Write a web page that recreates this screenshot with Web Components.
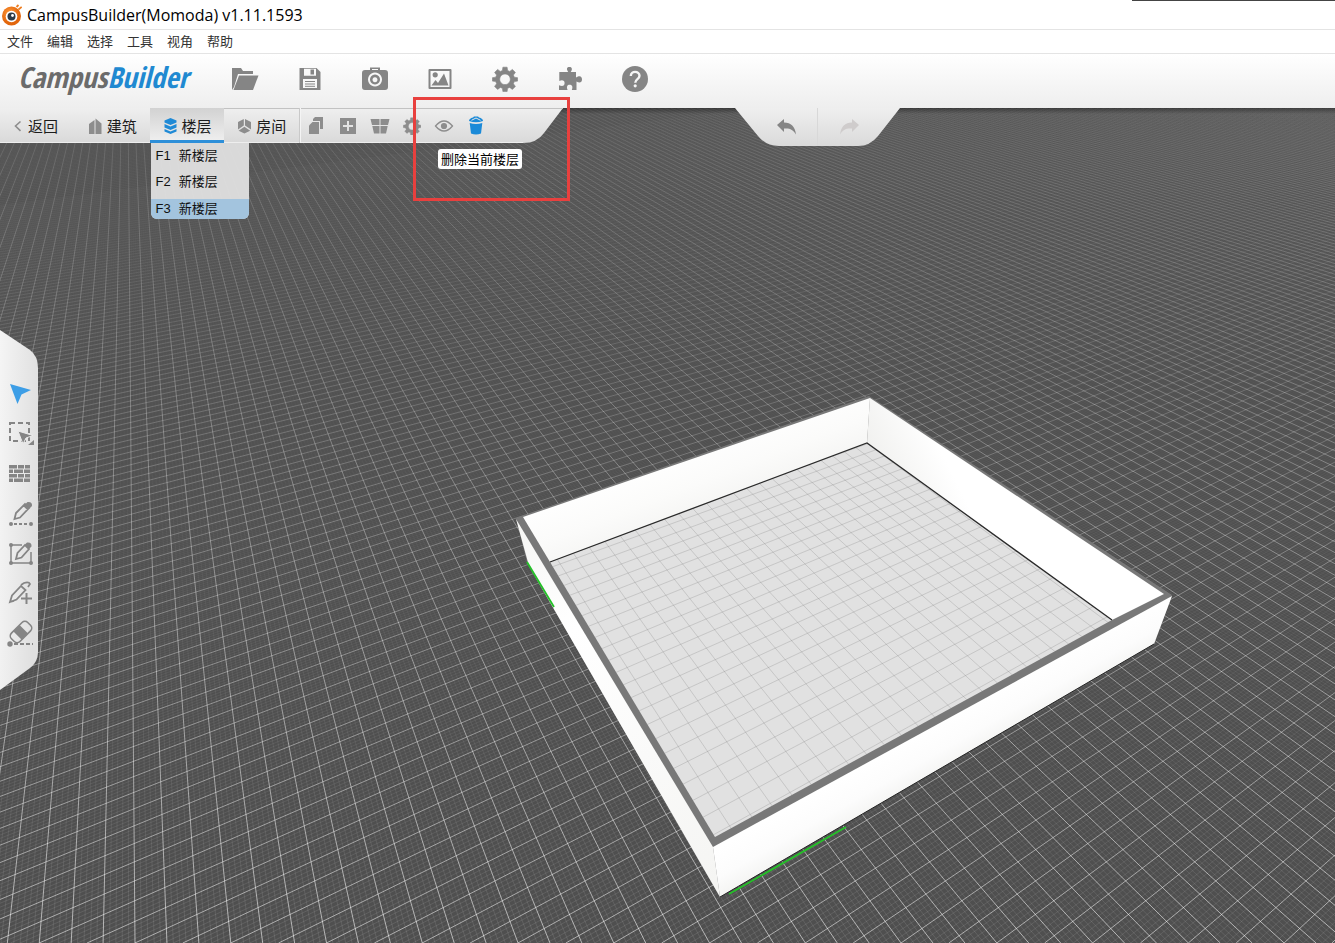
<!DOCTYPE html>
<html lang="zh-CN">
<head>
<meta charset="utf-8">
<title>CampusBuilder(Momoda) v1.11.1593</title>
<style>
html,body{height:100%;margin:0}
body{overflow:hidden;font-family:"Liberation Sans","Noto Sans CJK SC",sans-serif;color:#222}
</style>
</head>
<body>
<campus-app></campus-app>
<script>
const ICONS = {
  app: [22, 22, `<defs><radialGradient id="g" cx=".4" cy=".35"><stop offset="0" stop-color="#ff9a3c"/><stop offset="1" stop-color="#e2660c"/></radialGradient></defs><circle cx="11.500" cy="12" r="9.500" fill="url(#g)"/><circle cx="11.500" cy="12.500" r="5.800" fill="#fff"/><circle cx="11.500" cy="12.500" r="4" fill="#2e3b48"/><circle cx="12.500" cy="11.500" r="1.400" fill="#fff"/><path d="M16.500 3l2-2M18.500 5.500l3.200-2.600" stroke="#ee7d20" stroke-width="1.800"/>`],
  folder: [28, 24, `<path d="M1 1h9l2 3h10v3H7L3 20 1 23z"/><path d="M8 8.500h19.500L22 23H2.500z"/>`],
  save: [24, 24, `<path fill-rule="evenodd" d="M1.500 1h17l4 4v18h-21zM6 1.800v7h12v-7zM5 12v9h14v-9z"/><path d="M12.500 2.500h3.500v5h-3.500z"/><path d="M7 14.500h10M7 17h10M7 19.300h10" stroke="currentColor" stroke-width="1"/>`],
  camera: [28, 26, `<path fill-rule="evenodd" d="M9 4V1.500h10V4h5q3 0 3 3v14q0 3-3 3H4q-3 0-3-3V7q0-3 3-3zM11 3v1h6V3zM14 6.500a7 7 0 1 0 .01 0z"/><path fill-rule="evenodd" d="M14 8.500a5 5 0 1 0 .01 0zM14 11.200a2.500 2.500 0 1 1-.01 0z"/>`],
  image: [24, 22, `<path fill-rule="evenodd" d="M1.500 1h21q1 0 1 1v18q0 1-1 1h-21q-1 0-1-1V2q0-1 1-1zM2.500 3v16h19V3z"/><circle cx="7.200" cy="6.800" r="2.600"/><path d="M3.500 17.500l4-5.500 2.500 3 6-9.500 4.500 12z"/>`],
  gear: [26, 26, `<path fill-rule="evenodd" d="M10.900 1.200h4.200l.5 3.300 2.100.9 2.700-2 3 3-2 2.700.9 2.100 3.300.5v3.400l-3.300.5-.9 2.100 2 2.700-3 3-2.700-2-2.100.9-.5 3.300h-4.200l-.5-3.300-2.100-.9-2.700 2-3-3 2-2.700-.9-2.100-3.300-.5v-3.400l3.300-.5.9-2.100-2-2.700 3-3 2.700 2 2.100-.9zM13 8a5.300 5.300 0 1 0 .01 0z" stroke="currentColor" stroke-linejoin="round" stroke-width=".6"/>`],
  puzzle: [26, 26, `<path d="M7 6h4.200C9 2.500 10 1 12.400 1s3.500 2 1.300 5H19v5.500c4-2.500 6-1 6 1.900 0 3-2.500 4-5.500 2V24h-4.700c1.500-3.500 0-5.200-2.200-5.200-2.300 0-3.400 2-2 5.200H2v-4.800c3.500 1.700 5.600.5 5.600-2.200 0-2.500-2.300-3.500-5.300-2V6z"/>`],
  help: [28, 28, `<circle cx="14" cy="14" r="13"/><path d="M9.800 11c0-5.500 8.700-5.300 8.700-.3 0 3.600-4.200 3.200-4.200 7" fill="none" stroke="#f6f6f6" stroke-width="2.400"/><circle cx="14.200" cy="20.800" r="1.600" fill="#f6f6f6"/>`],
  back: [11, 16, `<path d="M7.500 3.500L2.500 8l5 4.800" fill="none" stroke="currentColor" stroke-width="1.600"/>`],
  building: [15, 16, `<path d="M1 6l5.500-4v14H1zM7.500 .5L13.500 5.500V16h-6z"/>`],
  floors: [15, 16, `<path d="M1.500 2.500L7.500 0l6 2.500v2L7.500 7l-6-2.500zM1.500 6l6 2.500 6-2.500v3.500L7.500 12l-6-2.500zM1.500 11l6 2.500 6-2.500v2.500L7.500 16l-6-2.500z"/>`],
  room: [15, 16, `<path d="M6.800 1v6.500L1 11.500V4zM8 1l6 3v7.500L8 7.500zM7.400 8.800l5.800 4-5.800 2.700-5.800-2.700z"/>`],
  copy: [16, 18, `<path d="M7 0h8v12h-3V4H5V2z"/><path d="M4.500 5H11v12H1V8.500z"/>`],
  add: [18, 18, `<path fill-rule="evenodd" d="M1 1h16v16H1zM8 4v4H4v2h4v4h2v-4h4V8h-4V4z"/>`],
  split: [20, 18, `<path d="M.5 2h9v6H2zM10.500 2h9L18 8h-7.500zM2.300 9h7.200v7.500H4zM10.500 9h7.200L16 16.500h-5.500z"/>`],
  gearsmall: [18, 18, ''],
  eye: [20, 16, `<path d="M1.500 8Q10-2 18.500 8 10 18 1.500 8z" fill="none" stroke="currentColor" stroke-width="1.300"/><circle cx="10" cy="8" r="3.100"/>`],
  trash: [16, 20, `<path d="M1 5Q1 2.500 5 1.500L6 .5h4l1 1q4 1 4 3.500-7 2.600-14 0z"/><path d="M3.500 4.300L8 2l4.500 2.300" stroke="#e5e5e5" fill="none"/><path d="M1.700 7q6.300 2 12.600 0L13 17.500q-5 2-10 0z"/>`],
  undo: [22, 18, `<path d="M1 7l7-6v3.500c7 0 11 4 12 12-3-5-6-6.500-12-6V14z"/>`],
  redo: [22, 18, `<path d="M21 7l-7-6v3.500c-7 0-11 4-12 12 3-5 6-6.500 12-6V14z"/>`],
  pointer: [24, 24, `<path d="M2 2l21 6-9.500 4.500L9.500 22z"/>`],
  marquee: [28, 24, `<path d="M4 1h19v18H4z" fill="none" stroke="currentColor" stroke-width="2" stroke-dasharray="5 3"/><path d="M12 9l15 4.500-7 2.500-3 6z" stroke="#ececec" stroke-width="1"/><path d="M28 18v5h-6z"/>`],
  wall: [24, 24, `<path d="M1 3h8v3.500H1zM10 3h6v3.500h-6zM17 3h5v3.500h-5zM1 7.500h4V11H1zM6 7.500h9V11H6zM16 7.500h6V11h-6zM1 12h8v3.500H1zM10 12h6v3.500h-6zM17 12h5v3.500h-5zM1 16.500h4V20H1zM6 16.500h9V20H6zM16 16.500h6V20h-6z"/>`],
  line: [26, 26, `<path d="M7.500 18l1.500-6L18 3l4 4-9 9.500zM17 4.500l4 4" fill="none" stroke="currentColor" stroke-width="1.800"/><path d="M18.500 3l2-2q5-.5 4.500 4l-2.500 2.500z"/><circle cx="4" cy="23" r="2"/><circle cx="24" cy="23" r="2"/><path d="M7 23h14" stroke="currentColor" stroke-width="1.800" stroke-dasharray="3 2"/>`],
  area: [26, 26, `<path d="M15 4H4v18h20V11" fill="none" stroke="currentColor" stroke-width="1.500"/><path d="M9 18l1.500-6L18 4l4 4-7.500 8.500z" fill="none" stroke="currentColor" stroke-width="1.800"/><path d="M18 3.500l2-2q5-.5 4.500 4L22 8z"/><circle cx="4" cy="4" r="2"/><circle cx="4" cy="22" r="2"/><circle cx="24" cy="22" r="2"/>`],
  addline: [26, 26, `<path d="M3 21l2-6.500L14 5l4.500 4-9 9.500zM14 4l3-2q5-1.500 6 1l-2 3M3 21l4-1" fill="none" stroke="currentColor" stroke-width="1.800"/><path d="M19.500 12v11M14 17.500h11" stroke="currentColor" stroke-width="2"/>`],
  erase: [28, 28, `<g transform="rotate(-45 15 12)"><rect x="3.500" y="6" width="23" height="12" rx="4" fill="none" stroke="currentColor" stroke-width="1.600"/><path d="M10 6h9v12h-9z"/></g><circle cx="4" cy="24" r="2.700"/><path d="M8 24h19" stroke="currentColor" stroke-width="1.800" stroke-dasharray="4 2"/>`]
};
ICONS.gearsmall[2] = `<g transform="scale(.7)">${ICONS.gear[2]}</g>`;

function define(name, html, setup) {
  const t = document.createElement('template');
  t.innerHTML = html;
  customElements.define(name, class extends HTMLElement {
    constructor() {
      super();
      this.attachShadow({mode: 'open'}).append(t.content.cloneNode(true));
    }
    connectedCallback() { if (setup) setup(this, this.shadowRoot); }
  });
}

define('ui-icon', `<style>:host{display:block;flex:none}svg{display:block;fill:currentColor}</style><svg aria-hidden="true"></svg>`, (el, root) => {
  const [w, h, body] = ICONS[el.getAttribute('name')];
  const svg = root.querySelector('svg');
  svg.setAttribute('viewBox', `0 0 ${w} ${h}`);
  svg.setAttribute('width', w);
  svg.setAttribute('height', h);
  svg.innerHTML = body;
});

define('icon-button', `<style>
:host{display:flex;width:var(--cell-w,32px);height:var(--cell-h,35px);color:var(--icon,#8d8d8d)}
button{all:unset;flex:1;display:flex;align-items:center;justify-content:center;cursor:pointer}
</style><button><slot></slot></button>`, (el, root) => {
  root.querySelector('button').setAttribute('aria-label', el.getAttribute('label'));
  if (!el.firstElementChild) {
    const icon = document.createElement('ui-icon');
    icon.setAttribute('name', el.getAttribute('icon'));
    el.append(icon);
  }
});

define('title-bar', `<style>
:host{display:flex;align-items:center;gap:5px;height:29px;background:#fff;border-bottom:1px solid #e4e4e4;position:relative}
h1{margin:0;font:400 16px/24px "Open Sans","Noto Sans",sans-serif;color:#000}
i{position:absolute;right:0;top:0;width:203px;height:1px;background:#444}
</style><ui-icon name="app"></ui-icon><h1><slot></slot></h1><i></i>`);

define('menu-bar', `<style>
:host{display:flex;gap:14px;height:23px;padding-left:7px;background:#fff;border-bottom:1px solid #e4e4e4}
button{all:unset;height:22px;font:13px/22px "Noto Sans CJK SC",sans-serif;color:#333;cursor:pointer}
</style><button>文件</button><button>编辑</button><button>选择</button><button>工具</button><button>视角</button><button>帮助</button>`);

define('main-toolbar', `<style>
:host{display:flex;height:54px;padding-left:18px;background:linear-gradient(#fff,#eee);position:relative;z-index:1;--cell-w:65px;--cell-h:50px;--icon:#858585}
.logo{width:194px;font:italic 700 29px/46px "Liberation Sans Narrow","Open Sans Condensed",sans-serif;color:#6b6b6b;white-space:nowrap}
.logo b{color:#2089d1}
</style><div class="logo">Campus<b>Builder</b></div>
<icon-button icon="folder" label="打开"></icon-button><icon-button icon="save" label="保存"></icon-button><icon-button icon="camera" label="截图"></icon-button><icon-button icon="image" label="图片"></icon-button><icon-button icon="gear" label="设置"></icon-button><icon-button icon="puzzle" label="插件"></icon-button><icon-button icon="help" label="帮助"></icon-button>`);

define('nav-tab', `<style>
:host{display:block;position:relative;width:75px;height:35px;color:#8d8d8d}
button{all:unset;box-sizing:border-box;width:100%;height:100%;padding-left:13px;display:flex;align-items:center;gap:4px;cursor:pointer;white-space:nowrap}
span{font:15px/20px "Noto Sans CJK SC",sans-serif;color:#1c1c1c}
:host([selected]){color:#1f8ad6}
:host([selected]) button{border-bottom:3px solid #2d8fd9;background:linear-gradient(#d2d2d2,#eee);padding-top:3px}
</style><button><span><slot></slot></span></button><slot name="menu"></slot>`, (el, root) => {
  const icon = document.createElement('ui-icon');
  icon.setAttribute('name', el.getAttribute('icon'));
  root.querySelector('button').prepend(icon);
});

define('floor-menu', `<style>
:host{display:block;position:absolute;left:1px;top:35px;width:98px;border-radius:0 0 6px 6px;overflow:hidden;background:rgba(225,225,225,.94)}
button{all:unset;box-sizing:border-box;width:98px;height:26px;padding-left:5px;display:flex;gap:8px;font:13px/26px "Liberation Sans","Noto Sans CJK SC",sans-serif;color:#111;cursor:pointer}
button:nth-of-type(2){height:30px}
button.on{height:20px;line-height:19px;background:#a3c4de}
</style><button><span>F1</span><span>新楼层</span></button><button><span>F2</span><span>新楼层</span></button><button class="on"><span>F3</span><span>新楼层</span></button>`);

define('level-nav', `<style>
:host{display:flex;position:relative;width:563px;height:35px}
.bg{position:absolute;inset:0;width:100%;height:100%}
nav,.tools{display:flex;position:relative}
nav{width:299px}
.tools{border-left:1px solid #c9c9c9;box-shadow:inset 1px 0 #f4f4f4;box-sizing:border-box}
.del{position:relative;--icon:#1b8ad8}
.tip{position:absolute;z-index:1;top:41px;left:-22px;padding:0 3px;border-radius:3px;background:#fff;font:13px/20px "Noto Sans CJK SC",sans-serif;color:#000;white-space:nowrap}
</style>
<svg class="bg" viewBox="0 0 563 35" preserveAspectRatio="none"><defs><linearGradient id="n" x2="0" y2="1"><stop stop-color="#efefef"/><stop offset="1" stop-color="#d9d9d9"/></linearGradient></defs><path d="M0 0H563L544 25Q537 35 523 35H0z" fill="url(#n)"/><path d="M0 34.500H523" stroke="#eee"/><path d="M212 .5H563" stroke="#c2c2c2"/></svg>
<nav><nav-tab icon="back">返回</nav-tab><nav-tab icon="building">建筑</nav-tab><nav-tab icon="floors" selected>楼层<floor-menu slot="menu"></floor-menu></nav-tab><nav-tab icon="room">房间</nav-tab></nav>
<div class="tools"><icon-button icon="copy" label="复制"></icon-button><icon-button icon="add" label="新增"></icon-button><icon-button icon="split" label="拆分"></icon-button><icon-button icon="gearsmall" label="设置"></icon-button><icon-button icon="eye" label="显示"></icon-button><div class="del"><icon-button icon="trash" label="删除"></icon-button><div class="tip" role="tooltip">删除当前楼层</div></div></div>`);

define('history-panel', `<style>
:host{display:flex;position:relative;justify-content:center;width:165px;height:38px;--cell-w:61px;--cell-h:38px}
svg{position:absolute;inset:0;width:100%;height:100%}
icon-button{position:relative}
.undo{--icon:#858585;border-right:1px solid #d8d8d8}.redo{--icon:#cfcccc}
</style><svg viewBox="0 0 165 38" preserveAspectRatio="none"><defs><linearGradient id="h" x2="0" y2="1"><stop stop-color="#efefef"/><stop offset="1" stop-color="#dadada"/></linearGradient></defs><path d="M0 0H165L143 28Q135 38 123 38H44Q31 38 23 28z" fill="url(#h)"/></svg>
<icon-button class="undo" icon="undo" label="撤销"></icon-button><icon-button class="redo" icon="redo" label="重做"></icon-button>`);

define('tool-box', `<style>
:host{display:flex;flex-direction:column;position:relative;width:38px;padding:44px 0 36px;--cell-w:40px;--cell-h:40px;--icon:#858585}
svg{position:absolute;inset:0;width:100%;height:100%}
icon-button{position:relative}
.on{--icon:#3d9ee6}
</style><svg viewBox="0 0 38 360" preserveAspectRatio="none"><defs><linearGradient id="t" y2=".2"><stop stop-color="#f5f5f5"/><stop offset="1" stop-color="#e0e0e0"/></linearGradient></defs><path d="M0 0L30 20Q38 26 38 38V322Q38 332 30 338L0 360z" fill="url(#t)"/></svg>
<icon-button class="on" icon="pointer" label="选择"></icon-button><icon-button icon="marquee" label="框选"></icon-button><icon-button icon="wall" label="墙"></icon-button><icon-button icon="line" label="画线"></icon-button><icon-button icon="area" label="画区域"></icon-button><icon-button icon="addline" label="加点"></icon-button><icon-button icon="erase" label="擦除"></icon-button>`);

define('scene-view', `<style>:host{display:block;overflow:hidden;background:#4f4f4f}svg{display:block;width:100%;height:100%}</style>
<svg viewBox="0 108 1335 835" preserveAspectRatio="xMidYMin slice" role="img" aria-label="3D">
<defs>
<linearGradient id="a" gradientUnits="userSpaceOnUse" x1="0" y1="108" x2="0" y2="943"><stop stop-color="#fff" stop-opacity=".08"/><stop offset=".1" stop-color="#fff" stop-opacity=".15"/><stop offset=".4" stop-color="#fff" stop-opacity=".29"/><stop offset="1" stop-color="#fff" stop-opacity=".58"/></linearGradient>
<linearGradient id="b" gradientUnits="userSpaceOnUse" x1="0" y1="108" x2="0" y2="943"><stop stop-color="#fff" stop-opacity=".02"/><stop offset=".15" stop-color="#fff" stop-opacity=".05"/><stop offset=".35" stop-color="#fff" stop-opacity=".19"/><stop offset="1" stop-color="#fff" stop-opacity=".54"/></linearGradient>
<linearGradient id="m" gradientUnits="userSpaceOnUse" x1="0" y1="108" x2="0" y2="943"><stop stop-color="#fff" stop-opacity=".005"/><stop offset=".4" stop-color="#fff" stop-opacity=".02"/><stop offset="1" stop-color="#fff" stop-opacity=".1"/></linearGradient>
<linearGradient id="shade" x2="0" y2="1"><stop stop-color="#000" stop-opacity=".35"/><stop offset="1" stop-color="#000" stop-opacity="0"/></linearGradient>
<linearGradient id="haze" x2="0" y2="1"><stop stop-color="#fff" stop-opacity=".02"/><stop offset="1" stop-color="#fff" stop-opacity="0"/></linearGradient>
<linearGradient id="w1" gradientUnits="userSpaceOnUse" x1="665" y1="455" x2="700" y2="545"><stop stop-color="#fff"/><stop offset=".4" stop-color="#fbfbfa"/><stop offset="1" stop-color="#efefed"/></linearGradient>
<linearGradient id="w2" gradientUnits="userSpaceOnUse" x1="866" y1="450" x2="925" y2="420"><stop stop-color="#f0f0ee"/><stop offset="1" stop-color="#fff"/></linearGradient>
<linearGradient id="w3" gradientUnits="userSpaceOnUse" x1="860" y1="768" x2="885" y2="812"><stop stop-color="#fff"/><stop offset=".5" stop-color="#fcfcfc"/><stop offset="1" stop-color="#f1f1ef"/></linearGradient>
<linearGradient id="w4" gradientUnits="userSpaceOnUse" x1="516" y1="519" x2="720" y2="880"><stop stop-color="#f6f6f4"/><stop offset=".3" stop-color="#fff"/><stop offset="1" stop-color="#f5f5f3"/></linearGradient>
<clipPath id="floor"><path d="M550 562L867 443 1112 620 715 837z"/></clipPath>
</defs>
<path d="M0 108H1335V400H0z" fill="url(#haze)"/>
<g fill="none"><path class="minor" stroke="url(#m)"/><path class="across" stroke="url(#b)"/><path class="along" stroke="url(#a)"/></g>
<path d="M0 108H1335V114H0z" fill="url(#shade)"/>
<path d="M516 518L869 396 1172 595 1154 644 720 897 527 562z" fill="#787878"/>
<path d="M550 562L867 443 1112 620 715 837z" fill="#e1e1e1"/>
<g clip-path="url(#floor)" fill="none" stroke="#777" stroke-opacity=".25"><path class="across"/><path class="along"/></g>
<path d="M523 517L870 398 867 443 550 562z" fill="url(#w1)"/>
<path d="M870 398L1164 594 1112 620 867 443z" fill="url(#w2)"/>
<path d="M550 562L867 443 1112 620" fill="none" stroke="#2b2b2b" stroke-width="1.300"/>
<path d="M516 519L713 847 720 897 529 566z" fill="url(#w4)"/>
<path d="M713 847L1172 596 1154 644 720 897z" fill="url(#w3)"/>
<path d="M720 897L1154 644" stroke="#222" fill="none"/>
<path d="M527 562L554 607M729 894L846 827" stroke="#24c128" stroke-width="1.800" fill="none"/>
</svg>`, (el, root) => {
  // Vanishing points of the two ground-line families share one horizon.
  const horizon = -107, ax = 126.3, bx = 2415, top = 108, bottom = 943;
  const family = (vx, m0, step, from, to, skip) => {
    let d = '';
    for (let k = from; k <= to; k++) {
      if (skip && k % 5 === 0) continue;
      const m = m0 + step * k;
      const x1 = vx + m * (top - horizon), x2 = vx + m * (bottom - horizon);
      if (Math.max(x1, x2) < 0 || Math.min(x1, x2) > 1335) continue;
      d += `M${x1.toFixed(2)} ${top}L${x2.toFixed(2)} ${bottom}`;
    }
    return d;
  };
  const along = family(ax, .0083, .0304, -25, 190);
  const across = family(bx, -1.3507, .0456, -230, 10);
  root.querySelectorAll('.along').forEach(p => p.setAttribute('d', along));
  root.querySelectorAll('.across').forEach(p => p.setAttribute('d', across));
  root.querySelector('.minor').setAttribute('d', family(ax, .0083, .00608, -125, 950, true) + family(bx, -1.3507, .00912, -700, 50, true));
});

define('campus-app', `<style>
:host{display:flex;flex-direction:column;height:100vh;min-height:720px;position:relative}
main{flex:1;min-height:0;display:grid;position:relative}
scene-view{grid-area:1/1;min-height:0;min-width:0}
.overlay{grid-area:1/1;position:relative;display:flex;flex-direction:column;align-items:flex-start;min-height:0}
.top{display:flex;gap:172px;align-items:flex-start;position:relative;z-index:1;height:38px}
tool-box{margin-top:184px}
.mark{position:absolute;z-index:3;left:413px;top:97px;width:157px;height:104px;box-sizing:border-box;border:3px solid #e8403e;pointer-events:none}
</style>
<title-bar>CampusBuilder(Momoda) v1.11.1593</title-bar><menu-bar></menu-bar><main-toolbar></main-toolbar>
<main><scene-view></scene-view><div class="overlay"><div class="top"><level-nav></level-nav><history-panel></history-panel></div><tool-box></tool-box></div></main><div class="mark"></div>`);
</script>
</body>
</html>
